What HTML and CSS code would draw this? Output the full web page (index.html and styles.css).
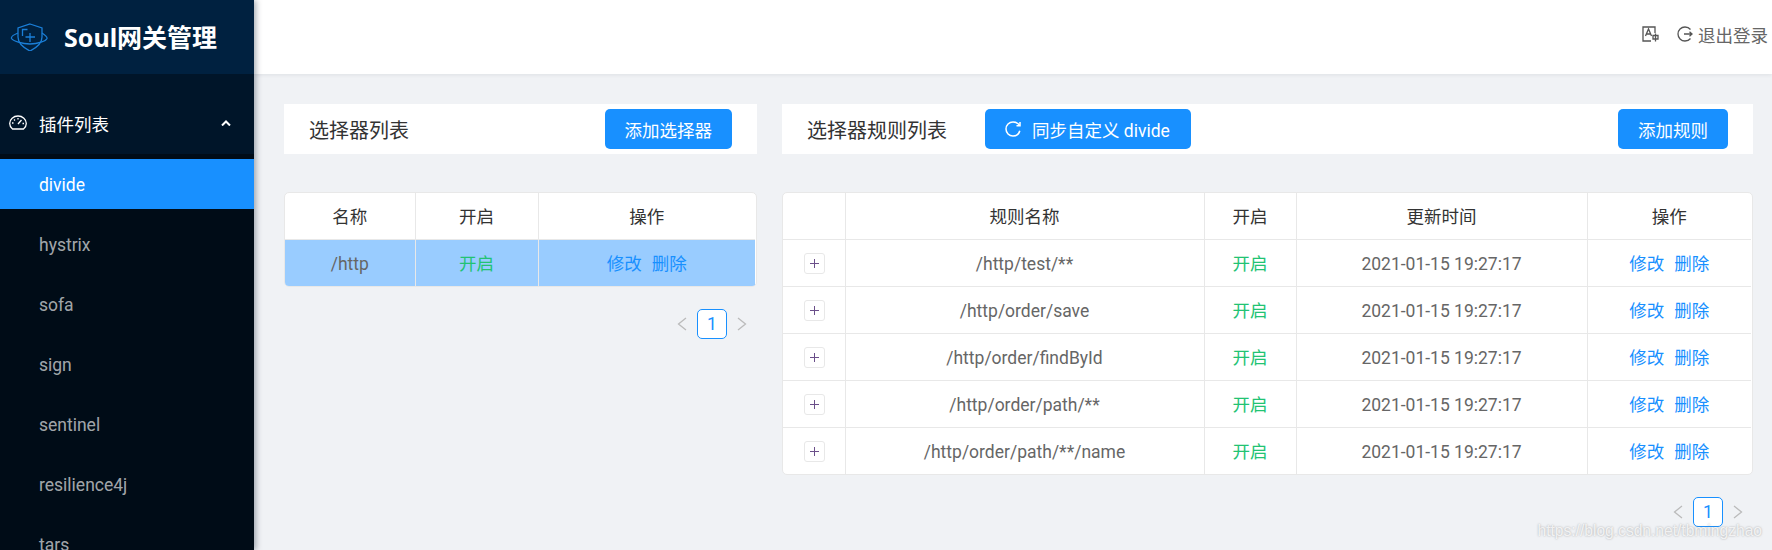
FILE: index.html
```html
<!DOCTYPE html>
<html lang="zh-CN">
<head>
    <meta charset="UTF-8">
    <title>Soul网关管理</title>
    <link rel="stylesheet" href="styles.css">
</head>
<body>

<aside class="sidebar">
    <div class="logo">
        <svg class="logo-icon" viewBox="0 0 38 30" width="38" height="30" fill="none" stroke="#1a7fd8" stroke-width="1.300">
            <path d="M20 3 L32 7 V16 C32 22 26 27 20 30 C14 27 8 22 8 16 V7 Z"/>
            <path d="M8 12 C3 14 1 16 1.500 17.500 C3 20 12 23 20 23 C28 23 36 20 37 17.500 C37.500 16 35 14 32 12"/>
            <path d="M12.500 15 V8.500 H17.500 M20 12 V21 M15.500 16 H25"/>
        </svg>
        <span class="logo-title">Soul网关管理</span>
    </div>
    <nav class="menu">
        <div class="menu-title">
            <svg class="menu-icon" viewBox="0 0 18 16" width="18" height="16" fill="none" stroke="#fff" stroke-width="1.300">
                <path d="M3.500 14 H14.500 C16.200 12.600 17.300 10.700 17.300 8.500 C17.300 4.300 13.600 1 9 1 C4.400 1 0.700 4.300 0.700 8.500 C0.700 10.700 1.800 12.600 3.500 14 Z"/>
                <path d="M9 9 L12.500 5 M3 8 H4.500 M13.500 8.500 H15 M5 4.500 L6 5.500 M9 3 V4.500"/>
            </svg>
            <span>插件列表</span>
            <svg class="menu-arrow" viewBox="0 0 10 6" width="10" height="6" fill="none" stroke="#fff" stroke-width="2">
                <path d="M1 5.500 L5 1.500 L9 5.500"/>
            </svg>
        </div>
        <ul class="submenu">
            <li class="active">divide</li>
            <li>hystrix</li>
            <li>sofa</li>
            <li>sign</li>
            <li>sentinel</li>
            <li>resilience4j</li>
            <li>tars</li>
        </ul>
    </nav>
</aside>

<div class="layout">
    <header class="topbar">
        <svg class="top-icon" viewBox="0 0 17 16" width="17" height="16" fill="none" stroke="#555" stroke-width="1.300">
            <path d="M9 15 H1 V1 H13 V7"/>
            <path d="M3.500 10 L6.500 3 L9.500 10 M4.500 8 H8.500"/>
            <path d="M11 9.500 H16 V13 H11 Z M13.500 7.500 V15.500"/>
        </svg>
        <svg class="top-icon logout-icon" viewBox="0 0 16 16" width="16" height="16" fill="none" stroke="#555" stroke-width="1.300">
            <path d="M13.500 3.500 C12.200 1.900 10.200 1 8 1 C4.100 1 1 4.100 1 8 C1 11.900 4.100 15 8 15 C10.200 15 12.200 14.100 13.500 12.500"/>
            <path d="M7 8 H15 M12.500 5.800 L15 8 L12.500 10.200"/>
        </svg>
        <span class="logout-text">退出登录</span>
    </header>

    <main class="content">
        <section class="selector-col">
            <div class="panel">
                <h3 class="panel-title">选择器列表</h3>
                <button class="btn btn-right">添加选择器</button>
            </div>
            <div class="table-wrap">
                <table class="table table-selector">
                    <thead>
                        <tr><th>名称</th><th>开启</th><th>操作</th></tr>
                    </thead>
                    <tbody>
                        <tr class="selected">
                            <td>/http</td>
                            <td class="on">开启</td>
                            <td class="ops"><a class="link">修改</a><a class="link">删除</a></td>
                        </tr>
                    </tbody>
                </table>
            </div>
            <div class="pager">
                <span class="pager-arrow">
                    <svg viewBox="0 0 10 14" width="10" height="14" fill="none" stroke="#bbb" stroke-width="1.300"><path d="M9 1 L1.500 7 L9 13"/></svg>
                </span>
                <span class="pager-num">1</span>
                <span class="pager-arrow">
                    <svg viewBox="0 0 10 14" width="10" height="14" fill="none" stroke="#bbb" stroke-width="1.300"><path d="M1 1 L8.500 7 L1 13"/></svg>
                </span>
            </div>
        </section>

        <section class="rule-col">
            <div class="panel">
                <h3 class="panel-title">选择器规则列表</h3>
                <button class="btn btn-sync">
                    <svg viewBox="0 0 16 16" width="16" height="16" fill="none" stroke="#fff" stroke-width="1.500">
                        <path d="M14.500 4.500 C13.200 2.300 10.800 1 8 1 C4.100 1 1 4.100 1 8 C1 11.900 4.100 15 8 15 C11.300 15 14 12.800 14.800 9.800"/>
                        <path d="M15 1 V4.800 H11.500"/>
                    </svg>
                    <span>同步自定义 divide</span>
                </button>
                <button class="btn btn-right">添加规则</button>
            </div>
            <div class="table-wrap">
                <table class="table table-rule">
                    <thead>
                        <tr><th></th><th>规则名称</th><th>开启</th><th>更新时间</th><th>操作</th></tr>
                    </thead>
                    <tbody>
                        <tr>
                            <td><span class="expand"><svg viewBox="0 0 9 9" width="9" height="9" stroke="#6b4f8a" stroke-width="1"><path d="M0 4.500 H9 M4.500 0 V9"/></svg></span></td>
                            <td>/http/test/**</td>
                            <td class="on">开启</td>
                            <td>2021-01-15 19:27:17</td>
                            <td class="ops"><a class="link">修改</a><a class="link">删除</a></td>
                        </tr>
                        <tr>
                            <td><span class="expand"><svg viewBox="0 0 9 9" width="9" height="9" stroke="#6b4f8a" stroke-width="1"><path d="M0 4.500 H9 M4.500 0 V9"/></svg></span></td>
                            <td>/http/order/save</td>
                            <td class="on">开启</td>
                            <td>2021-01-15 19:27:17</td>
                            <td class="ops"><a class="link">修改</a><a class="link">删除</a></td>
                        </tr>
                        <tr>
                            <td><span class="expand"><svg viewBox="0 0 9 9" width="9" height="9" stroke="#6b4f8a" stroke-width="1"><path d="M0 4.500 H9 M4.500 0 V9"/></svg></span></td>
                            <td>/http/order/findById</td>
                            <td class="on">开启</td>
                            <td>2021-01-15 19:27:17</td>
                            <td class="ops"><a class="link">修改</a><a class="link">删除</a></td>
                        </tr>
                        <tr>
                            <td><span class="expand"><svg viewBox="0 0 9 9" width="9" height="9" stroke="#6b4f8a" stroke-width="1"><path d="M0 4.500 H9 M4.500 0 V9"/></svg></span></td>
                            <td>/http/order/path/**</td>
                            <td class="on">开启</td>
                            <td>2021-01-15 19:27:17</td>
                            <td class="ops"><a class="link">修改</a><a class="link">删除</a></td>
                        </tr>
                        <tr>
                            <td><span class="expand"><svg viewBox="0 0 9 9" width="9" height="9" stroke="#6b4f8a" stroke-width="1"><path d="M0 4.500 H9 M4.500 0 V9"/></svg></span></td>
                            <td>/http/order/path/**/name</td>
                            <td class="on">开启</td>
                            <td>2021-01-15 19:27:17</td>
                            <td class="ops"><a class="link">修改</a><a class="link">删除</a></td>
                        </tr>
                    </tbody>
                </table>
            </div>
            <div class="pager">
                <span class="pager-arrow">
                    <svg viewBox="0 0 10 14" width="10" height="14" fill="none" stroke="#bbb" stroke-width="1.300"><path d="M9 1 L1.500 7 L9 13"/></svg>
                </span>
                <span class="pager-num">1</span>
                <span class="pager-arrow">
                    <svg viewBox="0 0 10 14" width="10" height="14" fill="none" stroke="#bbb" stroke-width="1.300"><path d="M1 1 L8.500 7 L1 13"/></svg>
                </span>
            </div>
        </section>
    </main>
</div>

<div class="watermark">https://blog.csdn.net/tbmingzhao</div>

</body>
</html>
```

FILE: styles.css
```css
/* Reset */
* {
    margin: 0;
    padding: 0;
    box-sizing: border-box;
}

html,
body {
    height: 100%;
    overflow: hidden;
}

body {
    display: flex;
    font-family: Roboto, "Noto Sans CJK SC", sans-serif;
    font-size: 17.5px;
    color: #666;
    background: #f0f2f5;
}

/* Sidebar */
.sidebar {
    width: 254px;
    flex-shrink: 0;
    height: 100%;
    background: #001529;
    box-shadow: 2px 0 6px rgba(0, 21, 41, 0.35);
    position: relative;
    z-index: 2;
    overflow: hidden;
}

.logo {
    height: 74px;
    background: #002140;
    display: flex;
    align-items: center;
    padding: 0 0 2px 10px;
}

.logo-title {
    margin-left: 16px;
    font-family: "Noto Sans", "Noto Sans CJK SC", sans-serif;
    font-size: 25px;
    font-weight: 700;
    color: #fff;
}

.menu {
    padding-top: 25px;
}

.menu-title {
    height: 50px;
    display: flex;
    align-items: center;
    padding: 0 0 2px 9px;
    color: #fff;
}

.menu-title span {
    margin-left: 12px;
}

.menu-arrow {
    margin-left: auto;
    margin-right: 23px;
}

.submenu {
    list-style: none;
    margin-top: 5px;
    padding-top: 5px;
    background: #000c17;
}

.submenu li {
    height: 50px;
    line-height: 52px;
    margin-bottom: 10px;
    padding-left: 39px;
    color: rgba(255, 255, 255, 0.65);
}

.submenu li.active {
    background: #1890ff;
    color: #fff;
}

/* Top bar */
.layout {
    flex: 1;
    min-width: 0;
    height: 100%;
}

.topbar {
    height: 74px;
    background: #fff;
    box-shadow: 0 1px 4px rgba(0, 21, 41, 0.08);
    display: flex;
    align-items: center;
    justify-content: flex-end;
    padding: 0 4px 6px 0;
}

.logout-icon {
    margin-left: 18px;
}

.logout-text {
    margin-left: 5px;
}

/* Content */
.content {
    display: grid;
    grid-template-columns: 473px 971px;
    column-gap: 25px;
    padding: 30px 0 0 30px;
}

.panel {
    height: 50px;
    background: #fff;
    display: flex;
    align-items: center;
    padding: 0 25px;
}

.panel-title {
    font-size: 20px;
    font-weight: 400;
    color: #333;
}

.btn {
    height: 40px;
    padding: 0 20px;
    border: none;
    border-radius: 5px;
    background: #1890ff;
    color: #fff;
    font: inherit;
    display: flex;
    align-items: center;
}

.btn-right {
    margin-left: auto;
}

.btn-sync {
    margin-left: 38px;
    padding-right: 21px;
}

.btn-sync span {
    margin-left: 11px;
}

/* Tables */
.table-wrap {
    margin-top: 38px;
    background: #fff;
    border: 1px solid #e8e8e8;
    border-radius: 5px;
    padding-right: 1px;
    overflow: hidden;
}

.table {
    width: 100%;
    border-collapse: collapse;
    table-layout: fixed;
}

.table th,
.table td {
    height: 47px;
    text-align: center;
    border-right: 1px solid #e8e8e8;
    border-bottom: 1px solid #e8e8e8;
}

.table td {
    padding-top: 2px;
}

.table td.on,
.table td.ops {
    padding-top: 0;
}

.table th {
    height: 46px;
    font-weight: 400;
    color: #333;
}

.table th:last-child,
.table td:last-child {
    border-right: none;
}

.table tbody tr:last-child td {
    border-bottom: none;
}

.table-selector th:nth-child(1) { width: 130px; }
.table-selector th:nth-child(2) { width: 123px; }

.table-rule th:nth-child(1) { width: 62px; }
.table-rule th:nth-child(2) { width: 359px; }
.table-rule th:nth-child(3) { width: 92px; }
.table-rule th:nth-child(4) { width: 291px; }

.selected td {
    background: #99ccff;
}

.on {
    color: #22c373;
}

.link {
    color: #1890ff;
    margin: 0 5px;
}

.expand {
    display: flex;
    align-items: center;
    justify-content: center;
    width: 21px;
    height: 21px;
    margin-left: 21px;
    border: 1px solid #e8e8e8;
    border-radius: 3px;
}

/* Pagination */
.pager {
    margin-top: 22px;
    padding-right: 5px;
    display: flex;
    justify-content: flex-end;
    gap: 5px;
}

.pager-arrow {
    width: 20px;
    height: 30px;
    display: flex;
    align-items: center;
    justify-content: center;
}

.pager-num {
    width: 30px;
    height: 30px;
    line-height: 28px;
    text-align: center;
    background: #fff;
    border: 1px solid #1890ff;
    border-radius: 5px;
    color: #1890ff;
}

/* Blog watermark over the screenshot */
.watermark {
    position: absolute;
    right: 10px;
    bottom: 10px;
    font-family: "Liberation Sans", sans-serif;
    font-size: 15.6px;
    color: rgba(255, 255, 255, 0.8);
    text-shadow: 0 0 2px rgba(110, 110, 110, 0.6);
    z-index: 3;
}
```
